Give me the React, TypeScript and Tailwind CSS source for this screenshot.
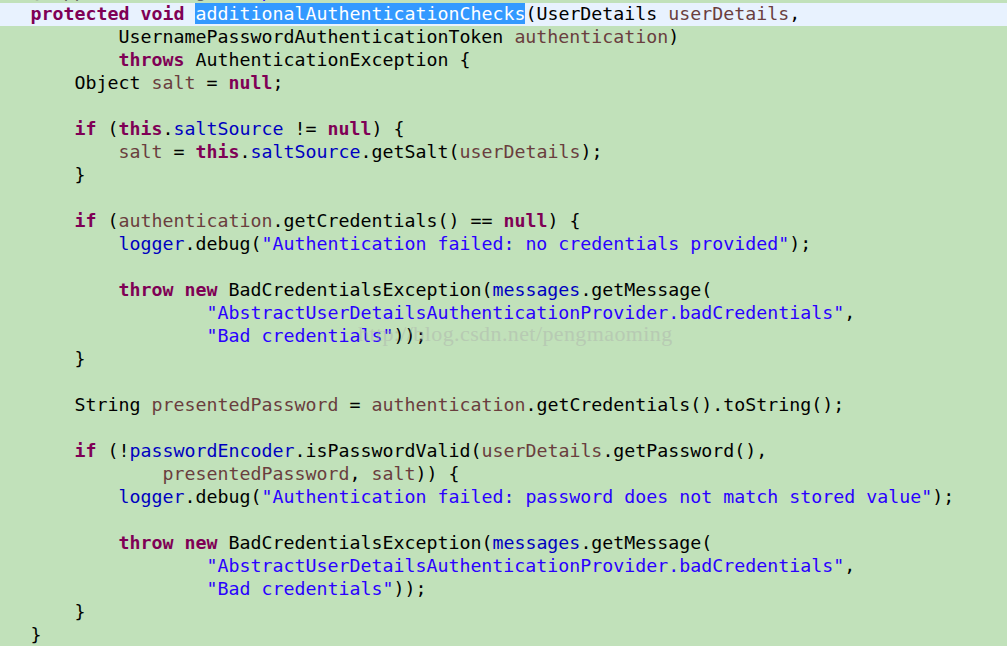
import React from "react";

type T = [string, string];

const K = "k"; // keyword
const S = "s"; // string
const F = "f"; // field
const V = "v"; // local var
const N = "n"; // normal
const A = "a"; // annotation
const SEL = "sel";

const cls: Record<string, string> = {
  k: "text-[#7f0055] font-bold",
  s: "text-[#2a00ff]",
  f: "text-[#0000c0]",
  v: "text-[#6a3e3e]",
  n: "text-[#000000]",
  a: "text-[#646464]",
  sel: "bg-[#3399ff] text-white",
};

const lines: T[][] = [
  [[A, "@SuppressWarnings"], [N, "("], [S, "\"deprecation\""], [N, ")"]],
  [[K, "protected"], [N, " "], [K, "void"], [N, " "], [SEL, "additionalAuthenticationChecks"], [N, "(UserDetails "], [V, "userDetails"], [N, ","]],
  [[N, "        UsernamePasswordAuthenticationToken "], [V, "authentication"], [N, ")"]],
  [[N, "        "], [K, "throws"], [N, " AuthenticationException {"]],
  [[N, "    Object "], [V, "salt"], [N, " = "], [K, "null"], [N, ";"]],
  [],
  [[N, "    "], [K, "if"], [N, " ("], [K, "this"], [N, "."], [F, "saltSource"], [N, " != "], [K, "null"], [N, ") {"]],
  [[N, "        "], [V, "salt"], [N, " = "], [K, "this"], [N, "."], [F, "saltSource"], [N, ".getSalt("], [V, "userDetails"], [N, ");"]],
  [[N, "    }"]],
  [],
  [[N, "    "], [K, "if"], [N, " ("], [V, "authentication"], [N, ".getCredentials() == "], [K, "null"], [N, ") {"]],
  [[N, "        "], [F, "logger"], [N, ".debug("], [S, "\"Authentication failed: no credentials provided\""], [N, ");"]],
  [],
  [[N, "        "], [K, "throw"], [N, " "], [K, "new"], [N, " BadCredentialsException("], [F, "messages"], [N, ".getMessage("]],
  [[N, "                "], [S, "\"AbstractUserDetailsAuthenticationProvider.badCredentials\""], [N, ","]],
  [[N, "                "], [S, "\"Bad credentials\""], [N, "));"]],
  [[N, "    }"]],
  [],
  [[N, "    String "], [V, "presentedPassword"], [N, " = "], [V, "authentication"], [N, ".getCredentials().toString();"]],
  [],
  [[N, "    "], [K, "if"], [N, " (!"], [F, "passwordEncoder"], [N, ".isPasswordValid("], [V, "userDetails"], [N, ".getPassword(),"]],
  [[N, "            "], [V, "presentedPassword"], [N, ", "], [V, "salt"], [N, ")) {"]],
  [[N, "        "], [F, "logger"], [N, ".debug("], [S, "\"Authentication failed: password does not match stored value\""], [N, ");"]],
  [],
  [[N, "        "], [K, "throw"], [N, " "], [K, "new"], [N, " BadCredentialsException("], [F, "messages"], [N, ".getMessage("]],
  [[N, "                "], [S, "\"AbstractUserDetailsAuthenticationProvider.badCredentials\""], [N, ","]],
  [[N, "                "], [S, "\"Bad credentials\""], [N, "));"]],
  [[N, "    }"]],
  [[N, "}"]],
];

export default function App() {
  return (
    <div className="relative w-[1007px] h-[646px] overflow-hidden bg-[#c1e1ba]">
      <div
        className="flex flex-col mt-[-20px] text-[18.27px] leading-[23px] whitespace-pre"
        style={{ fontFamily: '"DejaVu Sans Mono", monospace' }}
      >
        {lines.map((line, i) => (
          <div
            key={i}
            className={
              "h-[23px] pl-[30.5px] " + (i === 1 ? "bg-[#e8f2fe]" : "")
            }
          >
            <span className="relative top-[-1px]">
              {line.map(([t, s], j) => (
                <span key={j} className={cls[t]}>
                  {s}
                </span>
              ))}
            </span>
          </div>
        ))}
      </div>
      <div
        className="absolute left-[358px] top-[321px] text-[22px] leading-[26px] tracking-[0.4px] text-[#a9a9a9] opacity-40 whitespace-pre"
        style={{ fontFamily: '"Liberation Serif", serif' }}
      >
        http://blog.csdn.net/pengmaoming
      </div>
    </div>
  );
}
